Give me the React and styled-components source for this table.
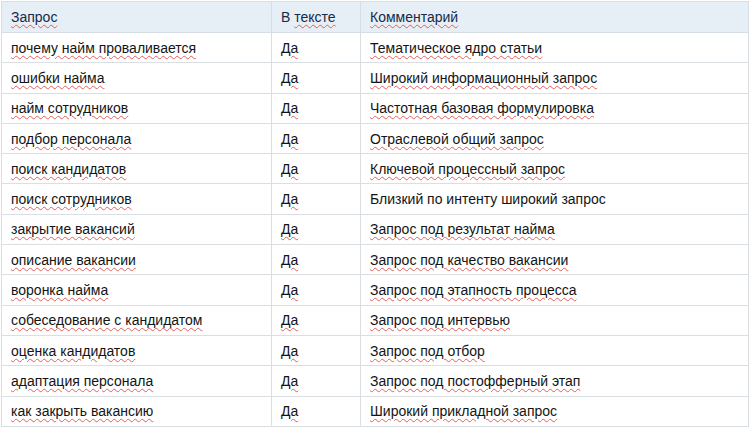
import React from "react";
import styled, { createGlobalStyle } from "styled-components";

const Global = createGlobalStyle`
  html, body { margin: 0; padding: 0; background: #ffffff; }
  body { font-family: "Liberation Sans", Arial, sans-serif; }
`;

const Wrap = styled.div`
  padding: 1px 2px 0 1px;
`;

const Table = styled.table`
  width: 748px;
  border-collapse: collapse;
  font-family: "Liberation Sans", Arial, sans-serif;
  font-size: 14px;
  color: #141414;
`;

const HeadCell = styled.th`
  background: #e6eef6;
  color: #172a4a;
  font-weight: normal;
  text-align: left;
  height: 30px;
  padding: 0 9px;
  border: 1px solid #d6dde5;
  width: ${(p) => p.$w}px;
`;

const Cell = styled.td`
  height: 29.3px;
  padding: 0 9px;
  border: 1px solid #dadfe4;
  vertical-align: middle;
`;

const Mark = styled.span`
  text-decoration: ${(p) => (p.$plain ? "none" : "underline wavy #e06060")};
  text-decoration-thickness: 1px;
  text-underline-offset: 2px;
`;

const rows = [
  ["почему найм проваливается", "Тематическое ядро статьи"],
  ["ошибки найма", "Широкий информационный запрос"],
  ["найм сотрудников", "Частотная базовая формулировка"],
  ["подбор персонала", "Отраслевой общий запрос"],
  ["поиск кандидатов", "Ключевой процессный запрос"],
  ["поиск сотрудников", "Близкий по интенту широкий запрос", true],
  ["закрытие вакансий", "Запрос под результат найма"],
  ["описание вакансии", "Запрос под качество вакансии"],
  ["воронка найма", "Запрос под этапность процесса"],
  ["собеседование с кандидатом", "Запрос под интервью"],
  ["оценка кандидатов", "Запрос под отбор"],
  ["адаптация персонала", "Запрос под постофферный этап"],
  ["как закрыть вакансию", "Широкий прикладной запрос"],
];

export default function App() {
  return (
    <Wrap>
      <Global />
      <Table>
        <thead>
          <tr>
            <HeadCell $w={251}>
              <Mark>Запрос</Mark>
            </HeadCell>
            <HeadCell $w={70}>
              В <Mark>тексте</Mark>
            </HeadCell>
            <HeadCell>
              <Mark>Комментарий</Mark>
            </HeadCell>
          </tr>
        </thead>
        <tbody>
          {rows.map(([q, c, plain]) => (
            <tr key={q}>
              <Cell>
                <Mark>{q}</Mark>
              </Cell>
              <Cell>
                <Mark>Да</Mark>
              </Cell>
              <Cell>
                <Mark $plain={plain}>{c}</Mark>
              </Cell>
            </tr>
          ))}
        </tbody>
      </Table>
    </Wrap>
  );
}
